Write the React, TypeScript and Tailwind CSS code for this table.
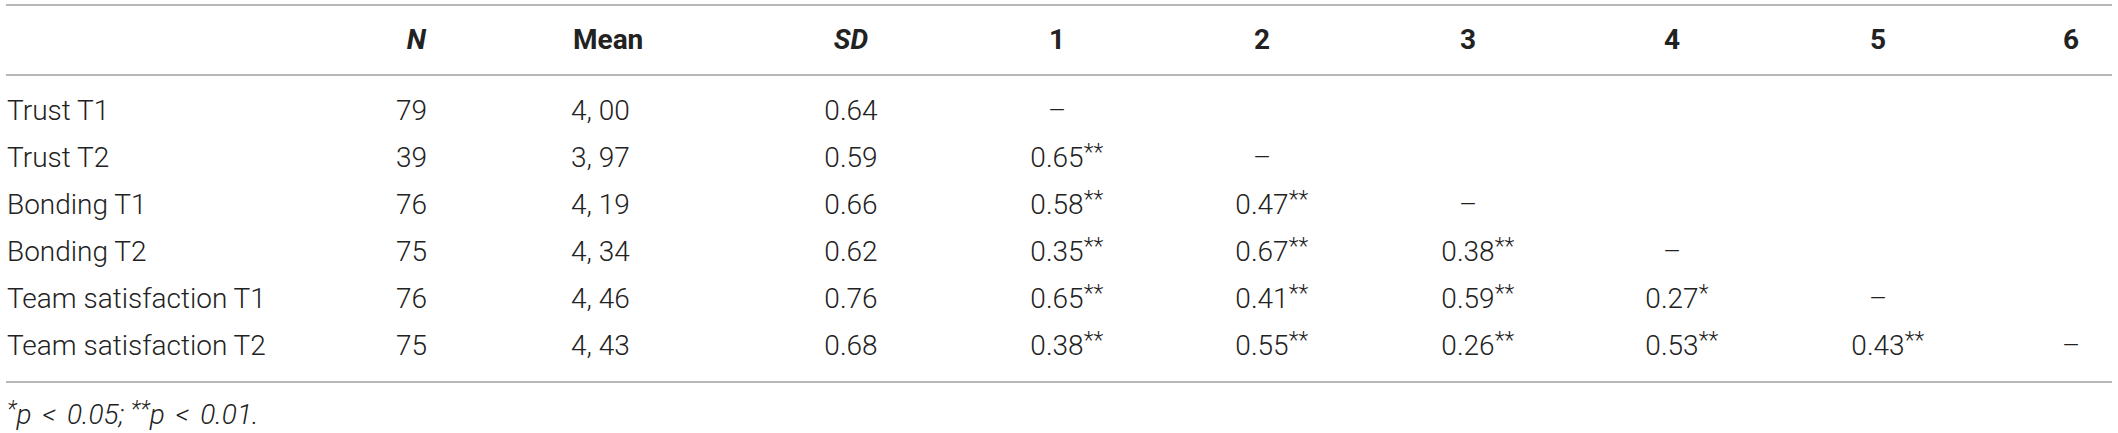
const header = ["1", "2", "3", "4", "5", "6"];

const rows: [string, string, string, string, string[]][] = [
  ["Trust T1", "79", "4, 00", "0.64", ["–", "", "", "", "", ""]],
  ["Trust T2", "39", "3, 97", "0.59", ["0.65**", "–", "", "", "", ""]],
  ["Bonding T1", "76", "4, 19", "0.66", ["0.58**", "0.47**", "–", "", "", ""]],
  ["Bonding T2", "75", "4, 34", "0.62", ["0.35**", "0.67**", "0.38**", "–", "", ""]],
  ["Team satisfaction T1", "76", "4, 46", "0.76", ["0.65**", "0.41**", "0.59**", "0.27*", "–", ""]],
  ["Team satisfaction T2", "75", "4, 43", "0.68", ["0.38**", "0.55**", "0.26**", "0.53**", "0.43**", "–"]],
];

const grid =
  "grid grid-cols-[340px_136px_248px_242px_170px_240px_172px_236px_176px_146px]";

function Stars({ s }: { s: string }) {
  return <span className="text-[23px] align-[7px]">{s}</span>;
}

function Value({ text }: { text: string }) {
  const m = text.match(/^([^*]*)(\*+)$/);
  if (!m) return <span>{text}</span>;
  return (
    <span className="whitespace-nowrap">
      {m[1]}
      {/* stars hang off the number so the number itself stays centred */}
      <span className="inline-block w-0 whitespace-nowrap">
        <Stars s={m[2]} />
      </span>
    </span>
  );
}

export default function App() {
  return (
    <div
      className="min-h-[433px] bg-white text-[#222] pt-[4px]"
      style={{ fontFamily: "Roboto, 'Liberation Sans', sans-serif" }}
    >
      <div className="ml-[6px] w-[2106px]">
        {/* Header */}
        <div className={`${grid} h-[72px] items-center border-y-2 border-[#b8b8b8] text-[28px] font-bold`}>
          <div />
          <div className="text-right pr-[56px] italic">N</div>
          <div className="pl-[91px]">Mean</div>
          <div className="text-center italic">SD</div>
          {header.map((h, i) => (
            <div key={h} className={i === 5 ? "text-center pl-[64px]" : "text-center"}>
              {h}
            </div>
          ))}
        </div>

        {/* Body */}
        <div className="pt-[11px] pb-[12px] border-b-2 border-[#b8b8b8] text-[28px] font-light">
          {rows.map(([label, n, mean, sd, corr]) => (
            <div key={label} className={`${grid} h-[47px] items-center`}>
              <div className="pl-[1px] whitespace-nowrap">{label}</div>
              <div className="text-right pr-[55px]">{n}</div>
              <div className="pl-[89px]">{mean}</div>
              <div className="text-center">{sd}</div>
              {corr.map((c, i) => (
                <div key={i} className={i === 5 ? "text-center pl-[64px]" : "text-center"}>
                  <Value text={c} />
                </div>
              ))}
            </div>
          ))}
        </div>

        {/* Footnote */}
        <div className="pt-[11px] pl-[1px] h-[43px] text-[28px] font-light italic leading-[32px] whitespace-nowrap">
          <Stars s="*" />p<span className="mx-[4px]"> &lt; </span>0.05;{" "}
          <Stars s="**" />p<span className="mx-[4px]"> &lt; </span>0.01.
        </div>
      </div>
    </div>
  );
}
